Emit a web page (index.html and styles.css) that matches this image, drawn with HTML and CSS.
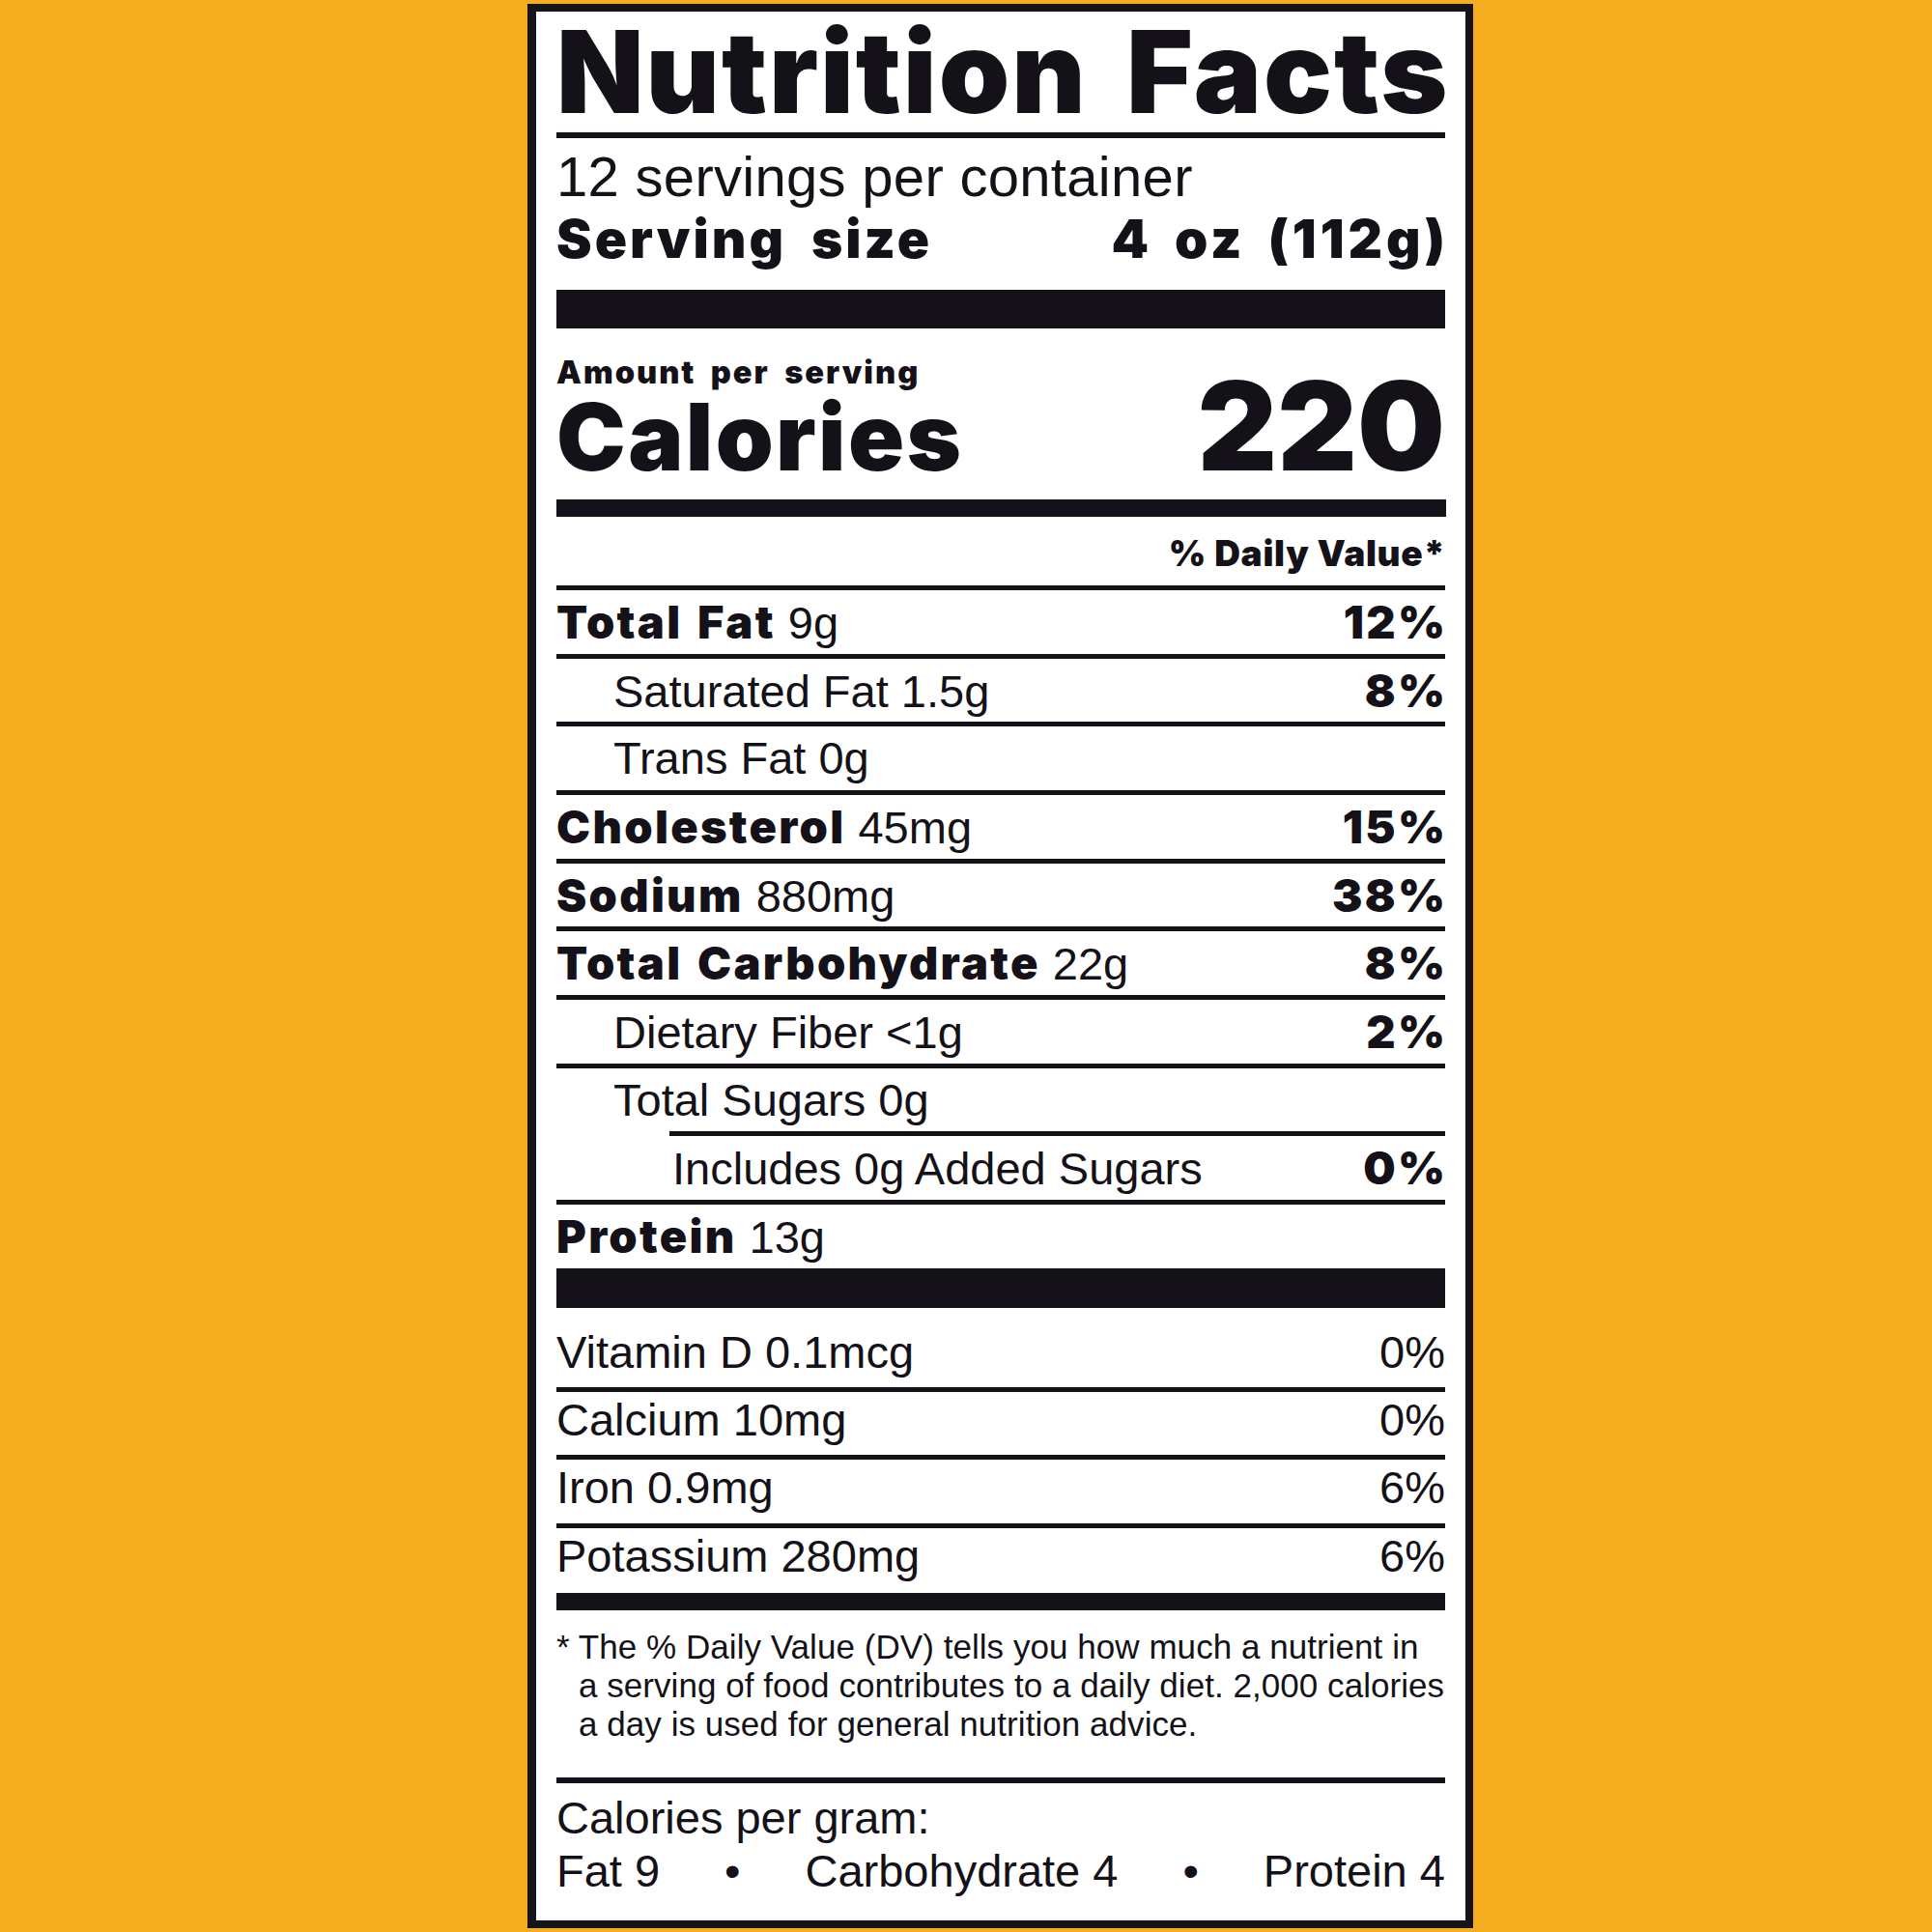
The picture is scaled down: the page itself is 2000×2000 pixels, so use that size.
FILE: index.html
```html
<!DOCTYPE html>
<html lang="en">
<head>
<meta charset="utf-8">
<title>Nutrition Facts</title>
<link rel="stylesheet" href="styles.css">
</head>
<body>
<div class="label">
  <h1 class="title">Nutrition Facts</h1>
  <div class="servings">
    <div class="servings-count">12 servings per container</div>
    <div class="serving-size"><span>Serving size</span><span class="size-value">4 oz (112g)</span></div>
  </div>
  <div class="calories">
    <div class="amount">Amount per serving</div>
    <div class="cal-row"><span class="cal-label">Calories</span><span class="cal-value">220</span></div>
  </div>
  <div class="dv-head">% Daily Value*</div>
  <div class="nutrients">
    <div class="row"><span class="name"><b>Total Fat</b> 9g</span><b class="pct">12%</b></div>
    <div class="row sub"><span class="name">Saturated Fat 1.5g</span><b class="pct">8%</b></div>
    <div class="row sub"><span class="name">Trans Fat 0g</span></div>
    <div class="row"><span class="name"><b>Cholesterol</b> 45mg</span><b class="pct">15%</b></div>
    <div class="row"><span class="name"><b>Sodium</b> 880mg</span><b class="pct">38%</b></div>
    <div class="row"><span class="name"><b>Total Carbohydrate</b> 22g</span><b class="pct">8%</b></div>
    <div class="row sub"><span class="name">Dietary Fiber &lt;1g</span><b class="pct">2%</b></div>
    <div class="row sub"><span class="name">Total Sugars 0g</span></div>
    <div class="row subsub"><span class="name">Includes 0g Added Sugars</span><b class="pct">0%</b></div>
    <div class="row"><span class="name"><b>Protein</b> 13g</span></div>
  </div>
  <div class="vitamins">
    <div class="vrow"><span>Vitamin D 0.1mcg</span><span>0%</span></div>
    <div class="vrow"><span>Calcium 10mg</span><span>0%</span></div>
    <div class="vrow"><span>Iron 0.9mg</span><span>6%</span></div>
    <div class="vrow"><span>Potassium 280mg</span><span>6%</span></div>
  </div>
  <div class="footnote">
    <p>* The % Daily Value (DV) tells you how much a nutrient in<br>a serving of food contributes to a daily diet. 2,000 calories<br>a day is used for general nutrition advice.</p>
  </div>
  <div class="cpg">
    <div class="cpg-title">Calories per gram:</div>
    <div class="cpg-row"><span>Fat 9</span><span class="dot">&bull;</span><span>Carbohydrate 4</span><span class="dot">&bull;</span><span>Protein 4</span></div>
  </div>
</div>
</body>
</html>
```

FILE: styles.css
```css
html, body {
  margin: 0;
  padding: 0;
}

body {
  background: #f6ac1f;
  width: 2000px;
  height: 2000px;
  overflow: hidden;
}

.label {
  box-sizing: border-box;
  width: 979px;
  height: 1992px;
  margin: 4px 0 0 546px;
  border: 8px solid #16141b;
  border-left-width: 9px;
  background: #ffffff;
  padding: 0 21px 0 21px;
  color: #141218;
  font-family: "Liberation Sans", Arial, sans-serif;
  font-weight: 400;
}

.label b,
.title,
.serving-size,
.amount,
.cal-row,
.dv-head {
  font-family: Inter, "Liberation Sans", Arial, sans-serif;
  font-weight: 900;
}

.title {
  margin: 0;
  height: 125px;
  font-size: 117.7px;
  line-height: 125px;
  white-space: nowrap;
  letter-spacing: 2px;
  word-spacing: 15px;
}

.servings {
  box-sizing: border-box;
  height: 163px;
  border-top: 6px solid #141218;
  padding-top: 8px;
}

.servings-count {
  font-size: 58px;
  line-height: 64px;
  white-space: nowrap;
  letter-spacing: 0.3px;
}

.serving-size {
  display: flex;
  justify-content: space-between;
  font-size: 55px;
  line-height: 64px;
  letter-spacing: 3px;
  word-spacing: 12px;
  white-space: nowrap;
}

.size-value {
  letter-spacing: 4px;
  word-spacing: 8px;
  margin-right: -4px;
}

.calories {
  box-sizing: border-box;
  height: 217px;
  border-top: 40px solid #141218;
  padding-top: 27px;
}

.amount {
  font-size: 32.6px;
  line-height: 36px;
  letter-spacing: 2px;
  word-spacing: 7px;
}

.cal-row {
  display: flex;
  justify-content: space-between;
  align-items: baseline;
  line-height: 76px;
}

.cal-label {
  font-size: 96px;
  letter-spacing: 2.4px;
}

.cal-value {
  font-size: 128px;
}

.dv-head {
  box-sizing: border-box;
  height: 89px;
  border-top: 18px solid #141218;
  padding-top: 6px;
  text-align: right;
  font-size: 37px;
  line-height: 64px;
  letter-spacing: 0.7px;
  margin-right: -0.7px;
}

.row {
  box-sizing: border-box;
  height: 70.67px;
  border-top: 5px solid #141218;
  display: flex;
  justify-content: space-between;
  align-items: baseline;
  font-size: 47px;
  line-height: 65.67px;
  white-space: nowrap;
}

.row b {
  letter-spacing: 2.3px;
  word-spacing: 4px;
}

.row .pct {
  margin-right: -2.3px;
}

.row.sub .name {
  padding-left: 59px;
}

.row.subsub {
  margin-left: 117px;
}

.row.subsub .name {
  padding-left: 3px;
}

.vitamins {
  border-top: 41px solid #141218;
}

.vrow {
  box-sizing: border-box;
  height: 70.5px;
  border-top: 5px solid #141218;
  display: flex;
  justify-content: space-between;
  align-items: baseline;
  font-size: 47px;
  line-height: 58px;
  white-space: nowrap;
}

.vrow:first-child {
  height: 82px;
  border-top: 0;
  padding-top: 17px;
}

.vrow:last-child {
  height: 72px;
}

.footnote {
  box-sizing: border-box;
  height: 191px;
  border-top: 18px solid #141218;
  padding-top: 18px;
}

.footnote p {
  margin: 0;
  font-size: 35px;
  line-height: 40px;
  padding-left: 23px;
  text-indent: -23px;
  white-space: nowrap;
  letter-spacing: 0.05px;
}

.cpg {
  border-top: 6px solid #141218;
  padding-top: 8px;
  font-size: 47px;
  line-height: 55px;
}

.cpg-row {
  display: flex;
  justify-content: space-between;
}
```
